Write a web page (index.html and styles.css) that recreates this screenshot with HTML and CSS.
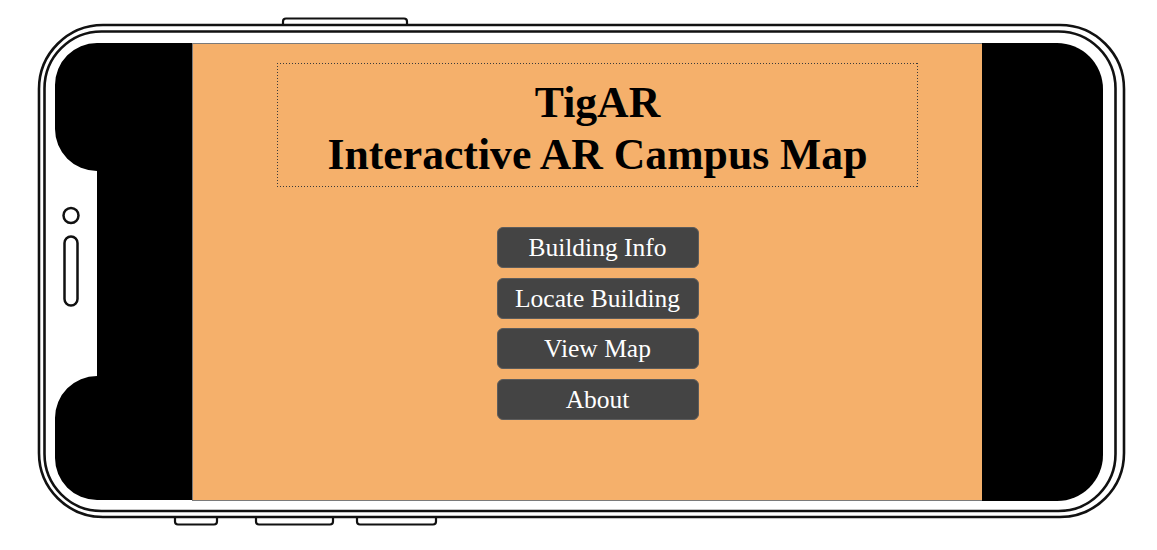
FILE: index.html
```html
<!DOCTYPE html>
<html lang="en">
<head>
<meta charset="utf-8">
<title>TigAR</title>
<link rel="stylesheet" href="styles.css">
</head>
<body>
<div class="phone">
  <svg class="frame" width="1157" height="550" viewBox="0 0 1157 550" xmlns="http://www.w3.org/2000/svg">
    <g fill="#fff" stroke="#111" stroke-width="2.2">
      <rect x="283" y="18.5" width="124" height="10" rx="3"/>
      <rect x="175" y="512" width="42" height="12.5" rx="3"/>
      <rect x="256" y="512" width="77" height="12.5" rx="3"/>
      <rect x="357" y="512" width="79" height="12.5" rx="3"/>
    </g>
    <rect x="39" y="25" width="1085" height="492" rx="64" fill="#fff" stroke="#111" stroke-width="2.6"/>
    <rect x="44.5" y="31.5" width="1071" height="479.5" rx="57" fill="#fff" stroke="#111" stroke-width="2.6"/>
    <circle cx="71" cy="215.5" r="7.5" fill="none" stroke="#111" stroke-width="2.5"/>
    <rect x="64.5" y="236.5" width="13" height="69" rx="6.5" fill="none" stroke="#111" stroke-width="2.5"/>
    <path d="M192 43 L97 43 A42 42 0 0 0 55 85 L55 129 A42 42 0 0 0 97 171 L97 376 A42 42 0 0 0 55 418 L55 458 A42 42 0 0 0 97 500 L192 500 Z" fill="#000"/>
    <path d="M982 43 L1057 43 A46 46 0 0 1 1103 89 L1103 455 A46 46 0 0 1 1057 501 L982 501 Z" fill="#000"/>
  </svg>
  <main class="screen">
    <header class="title-box">
      <h1 class="title">TigAR<br>Interactive AR Campus Map</h1>
    </header>
    <nav class="menu">
      <button class="menu-btn">Building Info</button>
      <button class="menu-btn">Locate Building</button>
      <button class="menu-btn">View Map</button>
      <button class="menu-btn">About</button>
    </nav>
  </main>
</div>
</body>
</html>
```

FILE: styles.css
```css
html, body {
  margin: 0;
  padding: 0;
  background: #fff;
}

.phone {
  position: relative;
  width: 1157px;
  height: 550px;
  padding: 43px 0 0 192px;
  box-sizing: border-box;
  overflow: hidden;
}

.frame {
  position: absolute;
  left: 0;
  top: 0;
}

.screen {
  position: relative;
  width: 790px;
  height: 458px;
  box-sizing: border-box;
  background: #f5b06b;
  border: 1px solid #7a7a7a;
  border-right: none;
  padding: 19px 0 0 20px;
  display: flex;
  flex-direction: column;
  align-items: center;
  font-family: "Liberation Serif", "Times New Roman", serif;
}

.title-box {
  width: 641px;
  height: 124px;
  box-sizing: border-box;
  padding-top: 13px;
  background-image:
    repeating-linear-gradient(to right, #3a3a3a 0 1.3px, transparent 1.3px 3px),
    repeating-linear-gradient(to right, #3a3a3a 0 1.3px, transparent 1.3px 3px),
    repeating-linear-gradient(to bottom, #3a3a3a 0 1.3px, transparent 1.3px 3px),
    repeating-linear-gradient(to bottom, #3a3a3a 0 1.3px, transparent 1.3px 3px);
  background-size: 100% 1.3px, 100% 1.3px, 1.3px 100%, 1.3px 100%;
  background-position: left top, left bottom, left top, right top;
  background-repeat: no-repeat;
}

.title {
  margin: 0;
  font-size: 43.7px;
  font-weight: bold;
  line-height: 52px;
  text-align: center;
  color: #000;
}

.menu {
  margin-top: 40px;
  display: flex;
  flex-direction: column;
  gap: 9.5px;
}

.menu-btn {
  width: 202px;
  height: 41px;
  box-sizing: border-box;
  background: #444444;
  border: 1px solid #5c5c5c;
  border-radius: 6px;
  color: #fff;
  font-family: "Liberation Serif", "Times New Roman", serif;
  font-size: 25.5px;
  padding: 0;
  line-height: 39px;
  cursor: pointer;
}
```
